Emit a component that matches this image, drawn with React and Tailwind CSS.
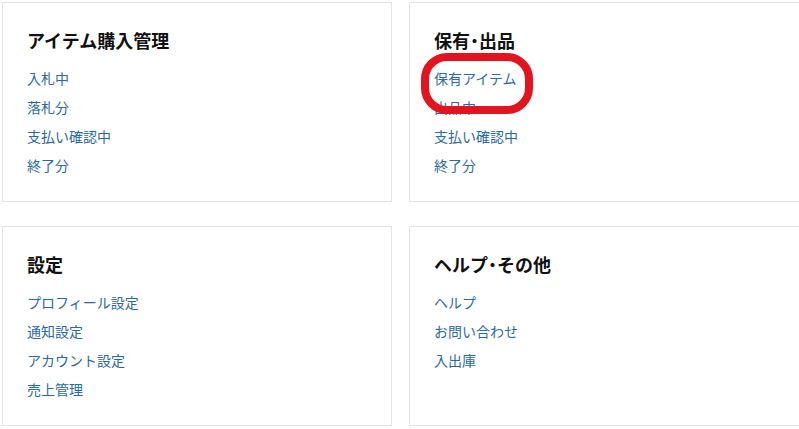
import React from "react";

const cards = [
  { title: ["アイテム購入管理"], links: ["入札中", "落札分", "支払い確認中", "終了分"] },
  { title: ["保有", "出品"], links: ["保有アイテム", "出品中", "支払い確認中", "終了分"], mark: true },
  { title: ["設定"], links: ["プロフィール設定", "通知設定", "アカウント設定", "売上管理"] },
  { title: ["ヘルプ", "その他"], links: ["ヘルプ", "お問い合わせ", "入出庫"] },
];

export default function App() {
  return (
    <div
      className="w-[799px] h-[429px] overflow-hidden bg-white p-[2px]"
      style={{ fontFamily: '"Noto Sans CJK JP", "Noto Sans", sans-serif' }}
    >
      <div className="grid grid-cols-[390px_392px] gap-x-[17px] gap-y-[24px]">
        {cards.map((c) => (
          <div
            key={c.title.join()}
            className="relative h-[200px] border border-[#e3e3e3] bg-white pl-6 pt-[24px]"
          >
            <h2 className="text-[18px] leading-[26px] font-bold text-[#111] flex items-center">
              <span>{c.title[0]}</span>
              {c.title.length > 1 && (
                <>
                  <span className="inline-flex w-[9px] justify-center overflow-visible">
                    <span className="text-[16px]">・</span>
                  </span>
                  <span>{c.title[1]}</span>
                </>
              )}
            </h2>
            <ul className="mt-[11px]">
              {c.links.map((l) => (
                <li key={l} className="text-[14px] leading-[29px] text-[#2a6aa3]">
                  {l}
                </li>
              ))}
            </ul>
            {c.mark && (
              <div className="absolute left-[11px] top-[50px] w-[112px] h-[61px] rounded-[26px] border-[8px] border-[#e2141f]" />
            )}
          </div>
        ))}
      </div>
    </div>
  );
}
